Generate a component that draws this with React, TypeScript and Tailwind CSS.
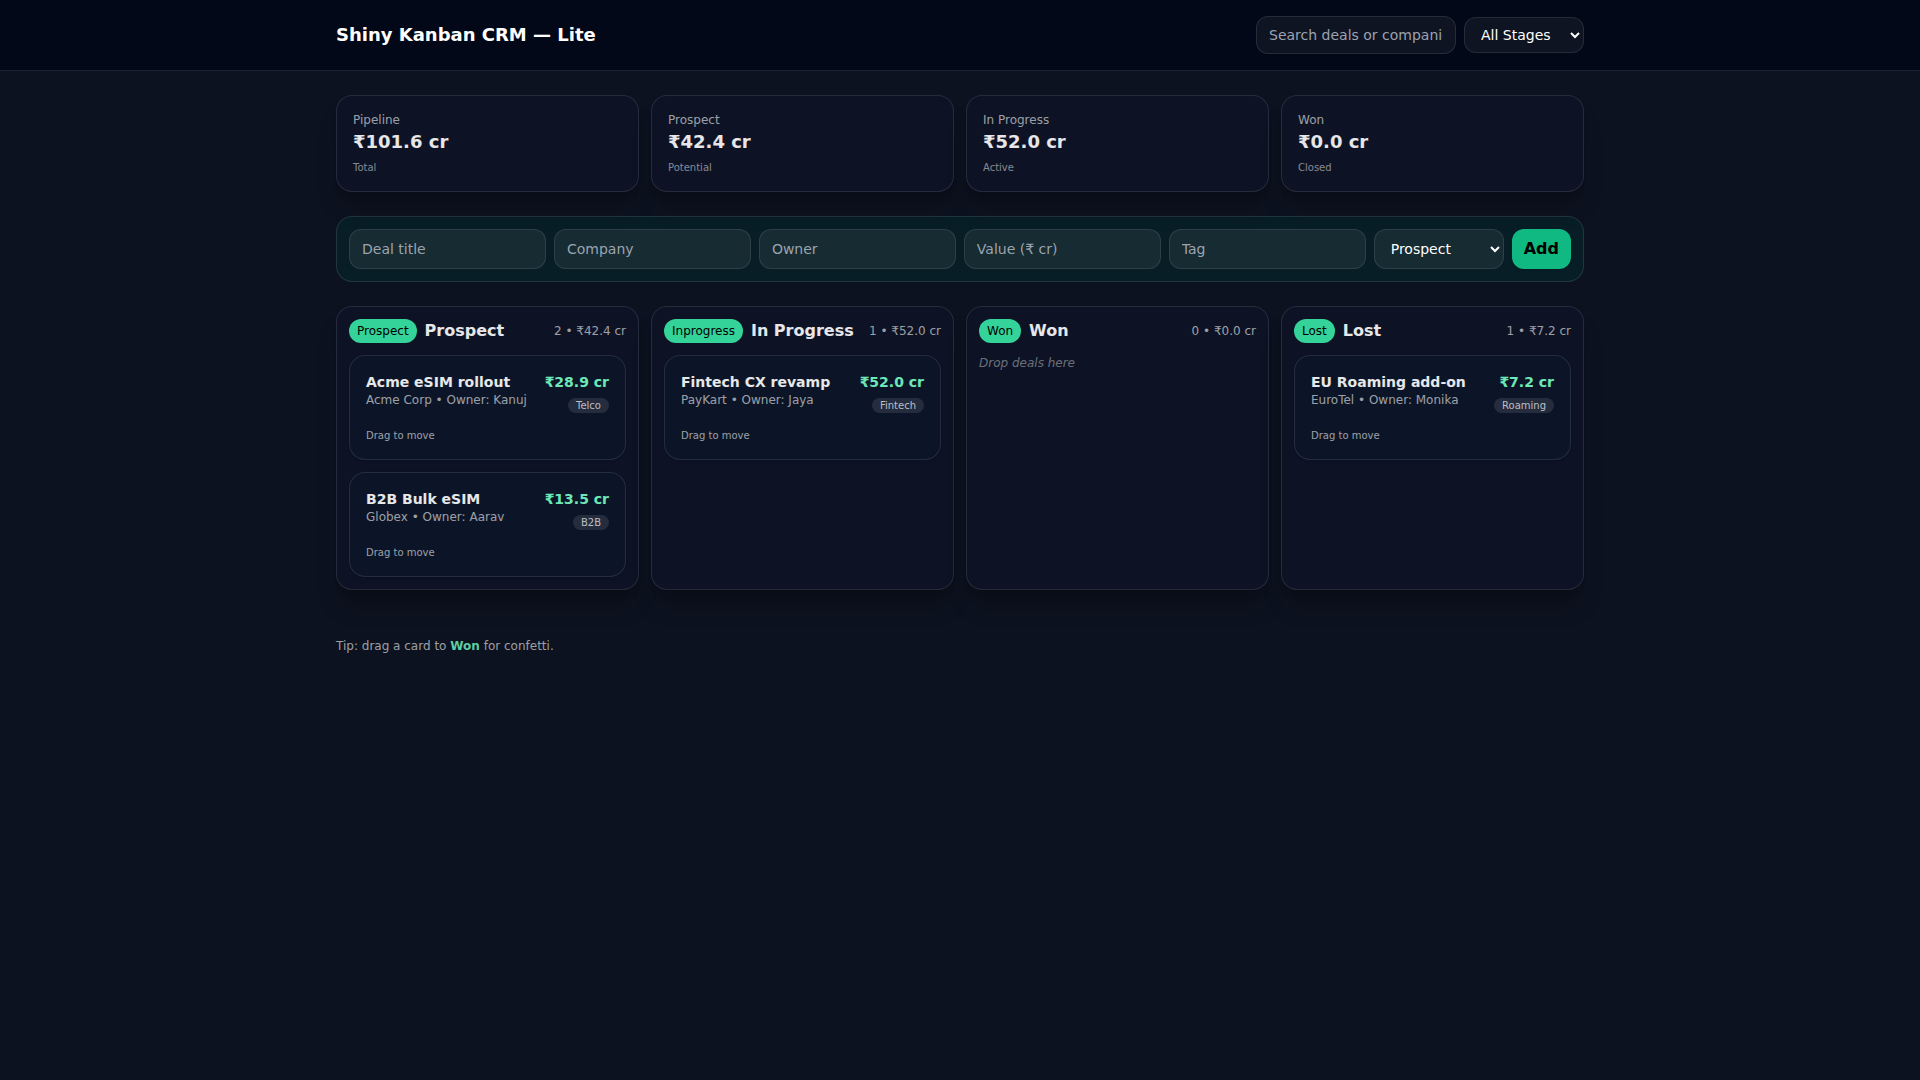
import { useState } from 'react'
import type { DragEvent, FormEvent } from 'react'

type Stage = 'prospect' | 'inprogress' | 'won' | 'lost'

interface Deal {
  id: number
  title: string
  company: string
  owner: string
  value: number
  tag: string
  stage: Stage
}

const STAGES: { key: Stage; label: string; badge: string }[] = [
  { key: 'prospect', label: 'Prospect', badge: 'Prospect' },
  { key: 'inprogress', label: 'In Progress', badge: 'Inprogress' },
  { key: 'won', label: 'Won', badge: 'Won' },
  { key: 'lost', label: 'Lost', badge: 'Lost' },
]

const INITIAL: Deal[] = [
  { id: 1, title: 'Acme eSIM rollout', company: 'Acme Corp', owner: 'Kanuj', value: 28.9, tag: 'Telco', stage: 'prospect' },
  { id: 2, title: 'B2B Bulk eSIM', company: 'Globex', owner: 'Aarav', value: 13.5, tag: 'B2B', stage: 'prospect' },
  { id: 3, title: 'Fintech CX revamp', company: 'PayKart', owner: 'Jaya', value: 52, tag: 'Fintech', stage: 'inprogress' },
  { id: 4, title: 'EU Roaming add-on', company: 'EuroTel', owner: 'Monika', value: 7.2, tag: 'Roaming', stage: 'lost' },
]

const EMPTY = { title: '', company: '', owner: '', value: '', tag: '' }

const FIELDS: { key: keyof typeof EMPTY; placeholder: string }[] = [
  { key: 'title', placeholder: 'Deal title' },
  { key: 'company', placeholder: 'Company' },
  { key: 'owner', placeholder: 'Owner' },
  { key: 'value', placeholder: 'Value (₹ cr)' },
  { key: 'tag', placeholder: 'Tag' },
]

const cr = (n: number) => `₹${n.toFixed(1)} cr`
const sum = (deals: Deal[]) => deals.reduce((total, d) => total + d.value, 0)

function Kpi({ label, value, sub }: { label: string; value: string; sub: string }) {
  return (
    <div className="rounded-2xl border border-white/10 bg-[#0d1325] p-4 shadow-xl shadow-black/20">
      <div className="text-xs text-white/60">{label}</div>
      <div className="text-lg font-bold text-white/90">{value}</div>
      <div className="mt-1 text-[10px] leading-[15px] text-white/50">{sub}</div>
    </div>
  )
}

function DealCard({ deal }: { deal: Deal }) {
  return (
    <article
      draggable
      onDragStart={(e) => e.dataTransfer.setData('text/plain', String(deal.id))}
      className="cursor-grab rounded-2xl border border-white/10 bg-[#0c1527] p-4 shadow-sm"
    >
      <div className="flex items-start justify-between">
        <div>
          <h3 className="text-sm font-semibold text-white/90">{deal.title}</h3>
          <p className="text-xs text-white/60">{deal.company} • Owner: {deal.owner}</p>
        </div>
        <div className="text-right">
          <div className="text-sm font-bold text-[#6ee7b7]">{cr(deal.value)}</div>
          <span className="rounded-full bg-white/10 px-2 py-0.5 text-[10px] text-white/70">{deal.tag}</span>
        </div>
      </div>
      <div className="mt-3 text-[10px] leading-[15px] text-white/60">Drag to move</div>
    </article>
  )
}

export default function App() {
  const [deals, setDeals] = useState<Deal[]>(INITIAL)
  const [query, setQuery] = useState('')
  const [filter, setFilter] = useState('all')
  const [form, setForm] = useState(EMPTY)
  const [stage, setStage] = useState<Stage>('prospect')

  const q = query.trim().toLowerCase()
  const visible = deals.filter(
    (d) => (filter === 'all' || d.stage === filter) && `${d.title} ${d.company}`.toLowerCase().includes(q),
  )

  function addDeal(e: FormEvent) {
    e.preventDefault()
    if (!form.title.trim()) return
    setDeals((prev) => [...prev, { ...form, id: Date.now(), value: Number(form.value) || 0, stage }])
    setForm(EMPTY)
  }

  function dropOn(e: DragEvent, target: Stage) {
    e.preventDefault()
    const id = Number(e.dataTransfer.getData('text/plain'))
    setDeals((prev) => prev.map((d) => (d.id === id ? { ...d, stage: target } : d)))
  }

  const total = (key: Stage) => cr(sum(deals.filter((d) => d.stage === key)))

  return (
    <div className="min-h-screen bg-[#0c121f] font-['DejaVu_Sans',sans-serif] text-white">
      <header className="border-b border-white/10 bg-[#020817]">
        <div className="mx-auto flex max-w-7xl items-center justify-between px-4 py-4">
          <h1 className="text-lg font-bold">Shiny Kanban CRM — Lite</h1>
          <div className="flex items-center gap-2">
            <input
              type="text"
              aria-label="Search deals"
              placeholder="Search deals or companies"
              value={query}
              onChange={(e) => setQuery(e.target.value)}
              className="w-[200px] rounded-xl border border-white/10 bg-white/5 px-3 py-2 text-sm outline-none placeholder:text-[#9ca3af]"
            />
            <select
              aria-label="Filter by stage"
              value={filter}
              onChange={(e) => setFilter(e.target.value)}
              className="w-[120px] rounded-xl border border-white/10 bg-white/5 px-3 py-2 text-sm leading-normal outline-none"
            >
              <option className="text-black" value="all">All Stages</option>
              {STAGES.map((s) => (
                <option className="text-black" key={s.key} value={s.key}>{s.label}</option>
              ))}
            </select>
          </div>
        </div>
      </header>

      <main className="mx-auto max-w-7xl space-y-6 px-4 py-6">
        <section className="grid grid-cols-2 gap-3 md:grid-cols-4">
          <Kpi label="Pipeline" value={cr(sum(deals))} sub="Total" />
          <Kpi label="Prospect" value={total('prospect')} sub="Potential" />
          <Kpi label="In Progress" value={total('inprogress')} sub="Active" />
          <Kpi label="Won" value={total('won')} sub="Closed" />
        </section>

        <form onSubmit={addDeal} className="flex flex-wrap gap-2 rounded-2xl border border-white/10 bg-[#081e26] p-3">
          {FIELDS.map((f) => (
            <input
              key={f.key}
              aria-label={f.placeholder}
              placeholder={f.placeholder}
              value={form[f.key]}
              onChange={(e) => setForm({ ...form, [f.key]: e.target.value })}
              className="w-32 flex-1 rounded-xl border border-white/10 bg-white/6 px-3 py-2 text-sm outline-none placeholder:text-[#9ca3af]"
            />
          ))}
          <select
            aria-label="Stage"
            value={stage}
            onChange={(e) => setStage(e.target.value as Stage)}
            className="w-[130px] rounded-xl border border-white/10 bg-white/6 px-3 py-2 text-sm outline-none"
          >
            {STAGES.map((s) => (
              <option className="text-black" key={s.key} value={s.key}>{s.label}</option>
            ))}
          </select>
          <button type="submit" className="rounded-xl bg-[#10b981] px-3 py-2 font-semibold text-black shadow">
            Add
          </button>
        </form>

        <section className="grid grid-cols-1 gap-3 md:grid-cols-2 lg:grid-cols-4">
          {STAGES.map((s) => {
            const items = visible.filter((d) => d.stage === s.key)
            return (
              <div
                key={s.key}
                onDragOver={(e) => e.preventDefault()}
                onDrop={(e) => dropOn(e, s.key)}
                className="rounded-2xl border border-white/10 bg-[#0d1325] p-3 shadow-xl shadow-black/20"
              >
                <div className="mb-3 flex items-center justify-between">
                  <div className="flex items-center gap-2">
                    <span className="rounded-full bg-[#34d399] px-2 py-1 text-xs text-black">{s.badge}</span>
                    <h2 className="font-semibold text-white/90">{s.label}</h2>
                  </div>
                  <span className="text-xs text-white/60">{items.length} • {cr(sum(items))}</span>
                </div>
                <div className="space-y-3">
                  {items.map((d) => (
                    <DealCard key={d.id} deal={d} />
                  ))}
                  {items.length === 0 && <p className="text-xs text-white/40 italic">Drop deals here</p>}
                </div>
              </div>
            )
          })}
        </section>
      </main>

      <footer className="mx-auto max-w-7xl px-4 py-6 text-xs text-white/60">
        Tip: drag a card to <b className="text-[#5dcea5]">Won</b> for confetti.
      </footer>
    </div>
  )
}
